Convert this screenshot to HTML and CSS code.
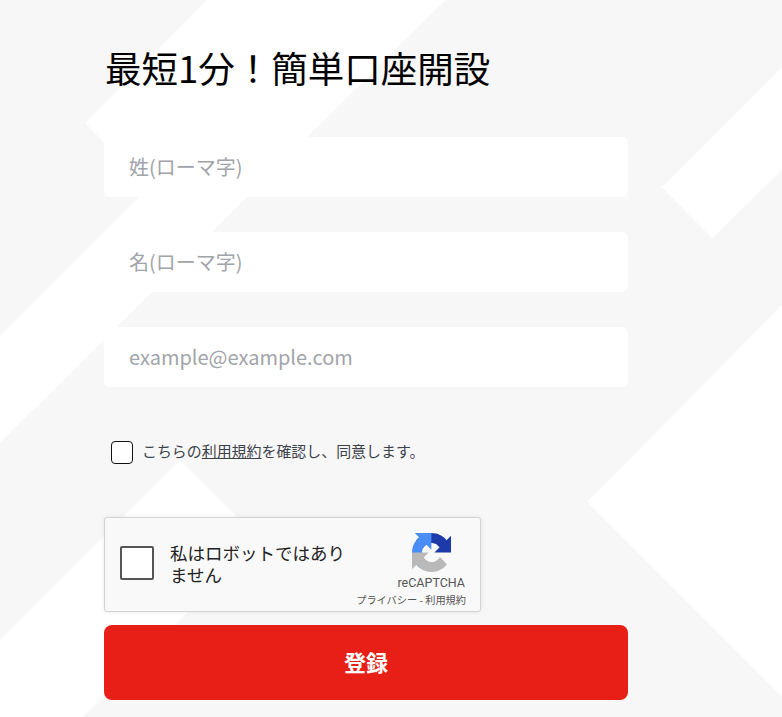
FILE: index.html
```html
<!DOCTYPE html>
<html lang="ja">
<head>
    <meta charset="UTF-8">
    <meta name="viewport" content="width=device-width, initial-scale=1.0">
    <link rel="stylesheet" href="styles.css">
</head>
<body>
    <svg class="background" viewBox="0 0 782 717" preserveAspectRatio="none">
        <polygon points="207,0 445,0 0,443 0,336 149,187 85,123"/>
        <polygon points="180,460 260,540 83,717 0,717 0,640"/>
        <polygon points="782,67 662,187 712,238 782,170"/>
        <polygon points="782,305 587,502 782,697"/>
    </svg>

    <form class="signup">
        <h1 class="title">最短1分！簡単口座開設</h1>
        <input class="field" type="text" placeholder="姓(ローマ字)">
        <input class="field" type="text" placeholder="名(ローマ字)">
        <input class="field" type="email" placeholder="example@example.com">

        <label class="terms">
            <input class="terms-check" type="checkbox">
            <span class="terms-text">こちらの<a class="terms-link" href="#">利用規約</a>を確認し、同意します。</span>
        </label>

        <div class="captcha">
            <div class="captcha-box"></div>
            <div class="captcha-label">私はロボットではありません</div>
            <div class="captcha-side">
                <div class="captcha-brand">
                    <svg class="captcha-logo" viewBox="0 0 64 64">
                        <path fill="#1c3aa9" d="M64 31.955l-.033-1.37V4.687l-7.16 7.16C50.948 4.674 42.033.093 32.05.093c-10.4 0-19.622 4.96-25.458 12.64l11.736 11.86a15.55 15.55 0 0 1 4.754-5.334c2.05-1.6 4.952-2.906 8.968-2.906.485 0 .86.057 1.135.163 4.976.393 9.288 3.14 11.828 7.124l-8.307 8.307c10.522-.04 22.41-.066 27.295.006"/>
                        <path fill="#4a8ef5" d="M31.862.094l-1.37.033H4.594l7.16 7.16C4.58 13.147 0 22.06 0 32.046c0 10.4 4.96 19.622 12.64 25.458L24.5 45.768a15.55 15.55 0 0 1-5.334-4.754c-1.6-2.05-2.906-4.952-2.906-8.968 0-.485.057-.86.163-1.135.393-4.976 3.14-9.288 7.124-11.828l8.307 8.307c-.04-10.522-.066-22.41.006-27.295"/>
                        <path fill="#b9b9b9" d="M.001 32.045l.033 1.37v25.898l7.16-7.16c5.86 7.173 14.774 11.754 24.76 11.754 10.4 0 19.622-4.96 25.458-12.64L45.677 39.408a15.55 15.55 0 0 1-4.754 5.334c-2.05 1.6-4.952 2.906-8.968 2.906-.485 0-.86-.057-1.135-.163-4.976-.393-9.288-3.14-11.828-7.124l8.307-8.307c-10.522.04-22.41.066-27.295-.006"/>
                    </svg>
                    <div class="captcha-name">reCAPTCHA</div>
                </div>
                <div class="captcha-links">プライバシー - 利用規約</div>
            </div>
        </div>

        <button class="submit" type="button">登録</button>
    </form>
</body>
</html>
```

FILE: styles.css
```css
* {
    margin: 0;
    padding: 0;
    box-sizing: border-box;
}

body {
    min-height: 100vh;
    position: relative;
    overflow: hidden;
    background: #f7f7f8;
    font-family: "Noto Sans CJK JP", "Noto Sans", sans-serif;
}

.background {
    position: absolute;
    top: 0;
    left: 0;
    width: 100%;
    height: 100%;
    fill: #ffffff;
}

.signup {
    position: relative;
    width: 524px;
    margin-left: 104px;
    padding-top: 41px;
    display: flex;
    flex-direction: column;
}

.title {
    font-size: 36.5px;
    font-weight: 400;
    line-height: 54px;
    color: #000000;
    margin-bottom: 42px;
    padding-left: 1px;
}

.field {
    height: 60px;
    margin-bottom: 35px;
    padding: 0 25px 2px;
    border: none;
    border-radius: 6px;
    background: #ffffff;
    font-family: inherit;
    font-size: 20px;
}

.field::placeholder {
    color: #a1a4a9;
    opacity: 1;
}

.terms {
    display: flex;
    align-items: center;
    gap: 9px;
    height: 23px;
    margin-top: 19px;
    padding-left: 7px;
    font-size: 14.95px;
    color: #3c4049;
}

.terms-check {
    appearance: none;
    width: 22px;
    height: 23px;
    border: 1px solid #111111;
    border-radius: 4px;
    background: #ffffff;
}

.terms-text {
    margin-bottom: 4px;
}

.terms-link {
    color: inherit;
}

.captcha {
    display: flex;
    width: 377px;
    height: 95px;
    margin-top: 53px;
    background: #f9f9f9;
    border: 1px solid #d3d3d3;
    border-radius: 3px;
    box-shadow: 0 0 4px rgba(0, 0, 0, 0.08);
    color: #222222;
}

.captcha-box {
    flex: none;
    width: 34px;
    height: 34px;
    margin: 28px 16px 0 15px;
    background: #ffffff;
    border: 2px solid #555555;
    border-radius: 2px;
}

.captcha-label {
    width: 180px;
    margin-top: 24px;
    font-size: 17.5px;
    line-height: 22px;
}

.captcha-side {
    flex: 1;
    display: flex;
    flex-direction: column;
    align-items: flex-end;
    padding: 15px 14px 0 0;
}

.captcha-brand {
    display: flex;
    flex-direction: column;
    align-items: center;
    margin-right: 1px;
}

.captcha-logo {
    width: 39px;
    height: 39px;
}

.captcha-name {
    margin-top: 3px;
    font-family: Roboto, "Liberation Sans", sans-serif;
    font-size: 12.5px;
    line-height: 16px;
    color: #555555;
}

.captcha-links {
    margin-top: 2px;
    font-size: 10.2px;
    line-height: 14px;
    white-space: nowrap;
    color: #555555;
}

.submit {
    height: 75px;
    margin-top: 13px;
    padding-bottom: 3px;
    border: none;
    border-radius: 8px;
    background: #e81f17;
    color: #ffffff;
    font-family: inherit;
    font-size: 22px;
    font-weight: 700;
    cursor: pointer;
}
```
